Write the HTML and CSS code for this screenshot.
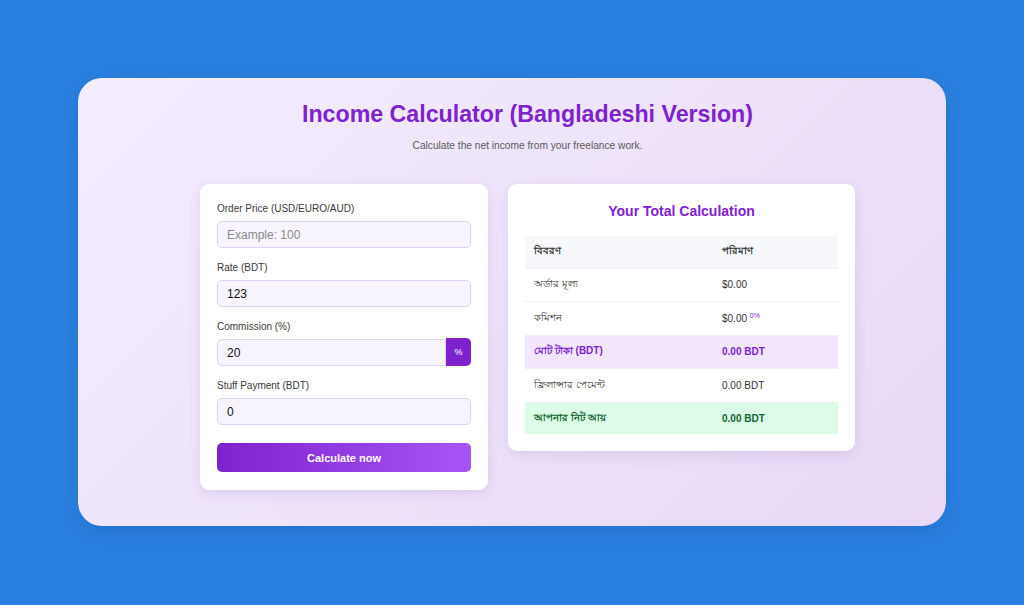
FILE: index.html
```html
<!DOCTYPE html>
<html lang="en">
<head>
<meta charset="utf-8">
<title>Income Calculator</title>
<link rel="stylesheet" href="styles.css">
</head>
<body>
<div class="page">
  <main class="panel">
    <div class="inner">
      <h1 class="title">Income Calculator (Bangladeshi Version)</h1>
      <p class="subtitle">Calculate the net income from your freelance work.</p>
      <div class="cols">
        <form class="card form-card">
          <label class="label">Order Price (USD/EURO/AUD)</label>
          <input class="input" type="text" placeholder="Example: 100">
          <label class="label">Rate (BDT)</label>
          <input class="input" type="text" value="123">
          <label class="label">Commission (%)</label>
          <div class="group">
            <input class="input input-group" type="text" value="20">
            <span class="addon">%</span>
          </div>
          <label class="label">Stuff Payment (BDT)</label>
          <input class="input" type="text" value="0">
          <button class="btn" type="button">Calculate now</button>
        </form>
        <section class="card result-card">
          <h2 class="result-title">Your Total Calculation</h2>
          <table class="table">
            <thead>
              <tr><th>বিবরণ</th><th>পরিমাণ</th></tr>
            </thead>
            <tbody>
              <tr><td>অর্ডার মূল্য</td><td>$0.00</td></tr>
              <tr><td>কমিশন</td><td>$0.00 <sup class="pct">0%</sup></td></tr>
              <tr class="row-total"><td>মোট টাকা (BDT)</td><td>0.00 BDT</td></tr>
              <tr><td>ফ্রিলান্সার পেমেন্ট</td><td>0.00 BDT</td></tr>
              <tr class="row-net"><td>আপনার নিট আয়</td><td>0.00 BDT</td></tr>
            </tbody>
          </table>
        </section>
      </div>
    </div>
  </main>
</div>
</body>
</html>
```
FILE: styles.css
```css
* { box-sizing: border-box; }
html, body { margin: 0; padding: 0; }
body {
  background: #2a80e0;
  font-family: "Liberation Sans", Arial, "Noto Sans", sans-serif;
  color: #333;
}
.page {
  width: 1024px;
  height: 605px;
  padding-top: 78px;
}
.panel {
  width: 868px;
  height: 448px;
  margin-left: 78px;
  border-radius: 24px;
  background: linear-gradient(135deg, #f4edfe 0%, #ede2fa 55%, #e8d8f6 100%);
  box-shadow: 0 6px 20px rgba(20, 40, 90, 0.15);
  padding-top: 22px;
}
.inner {
  width: 655px;
  margin-left: 122px;
}
.title {
  margin: 0;
  text-align: center;
  font-size: 23.2px;
  line-height: 28px;
  font-weight: 700;
  color: #7e22ce;
}
.subtitle {
  margin: 11px 0 0;
  text-align: center;
  font-size: 10.2px;
  line-height: 14px;
  color: #5a5a5a;
}
.cols {
  display: flex;
  gap: 20px;
  margin-top: 31px;
  align-items: flex-start;
}
.card {
  background: #fff;
  border-radius: 9px;
  box-shadow: 0 4px 14px rgba(90, 50, 140, 0.12);
}
.form-card {
  width: 288px;
  padding: 19px 17px 18px;
  display: flex;
  flex-direction: column;
  margin: 0;
}
.label {
  font-size: 10px;
  line-height: 12px;
  color: #3b3b3b;
  margin-bottom: 6px;
}
.input {
  width: 100%;
  height: 27px;
  border: 1px solid #ddd2f4;
  background: #f8f4fe;
  border-radius: 5px;
  padding: 0 9px;
  font-family: "Liberation Sans", Arial, sans-serif;
  font-size: 12px;
  color: #111;
  margin-bottom: 14px;
  outline: none;
}
.input::placeholder { color: #8a8a8a; }
.group {
  display: flex;
  margin-bottom: 14px;
}
.input-group {
  margin-bottom: 0;
  border-radius: 5px 0 0 5px;
  flex: 1;
}
.addon {
  width: 25px;
  height: 28px;
  margin-top: -1px;
  background: #7e22ce;
  color: #fff;
  font-size: 9px;
  display: flex;
  align-items: center;
  justify-content: center;
  border-radius: 0 5px 5px 0;
}
.btn {
  margin-top: 4px;
  height: 29px;
  border: none;
  border-radius: 5px;
  background: linear-gradient(90deg, #7e22ce 0%, #a855f7 100%);
  color: #fff;
  font-family: "Liberation Sans", Arial, sans-serif;
  font-size: 11px;
  font-weight: 700;
}
.result-card {
  width: 347px;
  padding: 19px 17px 17px;
}
.result-title {
  margin: 0 0 16px;
  text-align: center;
  font-size: 14px;
  line-height: 17px;
  font-weight: 700;
  color: #7e22ce;
}
.table {
  width: 100%;
  border-collapse: collapse;
  font-size: 10px;
  table-layout: fixed;
}
.table th, .table td {
  text-align: left;
  padding: 0 9px;
  height: 33.5px;
  border-bottom: 1px solid #eef0f4;
  color: #333;
}
.table th { font-weight: 700; background: #f6f8fb; height: 32px; }
.table th:first-child { width: 188px; }
.table tr:last-child td { border-bottom: none; }
.pct { color: #7e22ce; font-size: 7px; }
.row-total td { background: #f1e6fe; color: #7e22ce; font-weight: 700; }
.row-net td { background: #dcfce7; color: #166534; font-weight: 700; height: 32px; }
```
